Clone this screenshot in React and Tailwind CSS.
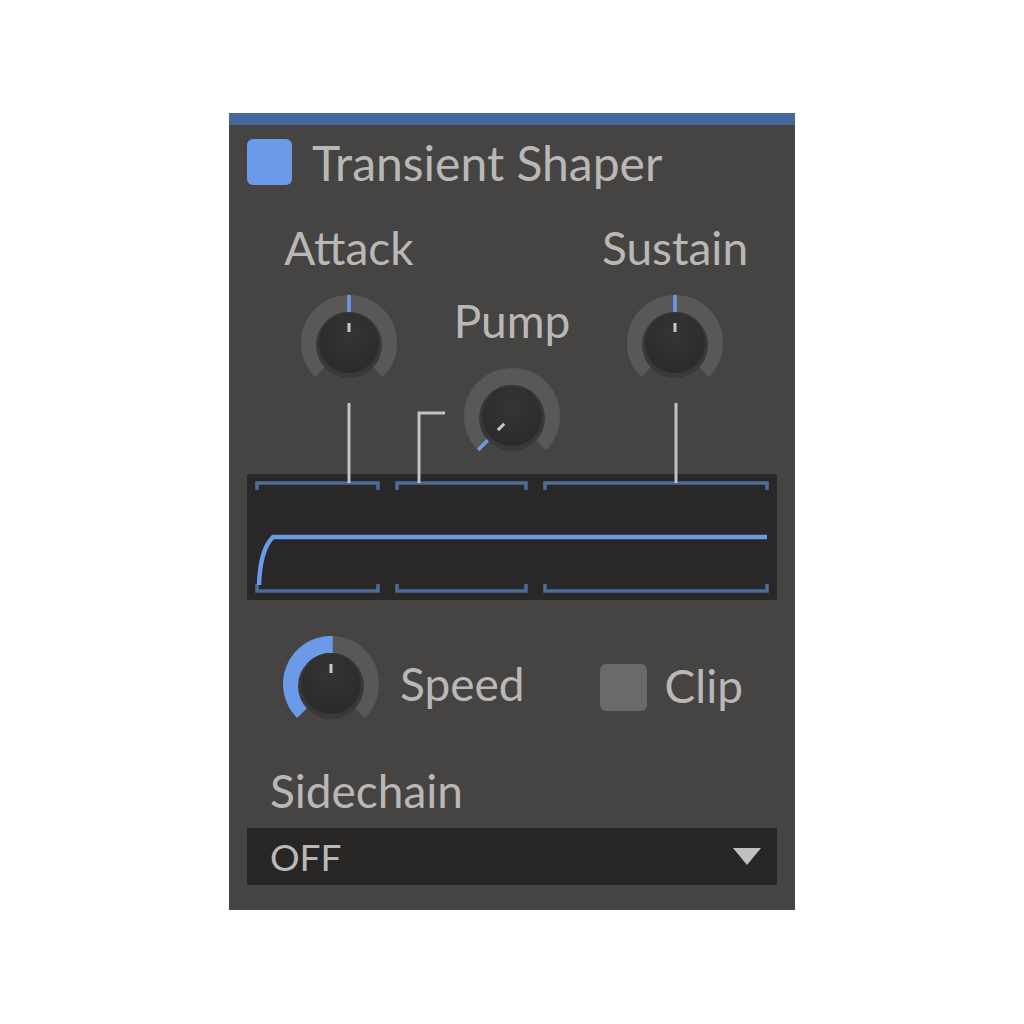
import React from "react";

const BLUE = "#6b9be8";

function pt(cx, cy, r, deg) {
  const a = (deg * Math.PI) / 180;
  return [cx + r * Math.sin(a), cy - r * Math.cos(a)];
}

function arc(cx, cy, r, from, to) {
  const [x1, y1] = pt(cx, cy, r, from);
  const [x2, y2] = pt(cx, cy, r, to);
  const large = to - from > 180 ? 1 : 0;
  return `M${x1} ${y1} A${r} ${r} 0 ${large} 1 ${x2} ${y2}`;
}

function Knob({ value, bipolar = false }) {
  // value is an angle between -135 and 135
  const start = bipolar ? 0 : -135;
  const [p1x, p1y] = pt(50, 50, 11, value);
  const [p2x, p2y] = pt(50, 50, 20, value);
  const [b1x, b1y] = pt(50, 50, 31, value);
  const [b2x, b2y] = pt(50, 50, 48, value);
  return (
    <svg width="100" height="100" viewBox="0 0 100 100">
      <defs>
        <radialGradient id="kb" cx="50%" cy="35%" r="65%">
          <stop offset="0%" stopColor="#363534" />
          <stop offset="100%" stopColor="#2b2a2a" />
        </radialGradient>
      </defs>
      <path d={arc(50, 50, 39.5, -135, 135)} stroke="#595857" strokeWidth="17" fill="none" />
      {value !== start && (
        <path
          d={value > start ? arc(50, 50, 39.5, start, value) : arc(50, 50, 39.5, value, start)}
          stroke={BLUE}
          strokeWidth="17"
          fill="none"
        />
      )}
      <line x1={b1x} y1={b1y} x2={b2x} y2={b2y} stroke={BLUE} strokeWidth="3.5" />
      <circle cx="50" cy="52" r="33" fill="#3a3938" />
      <circle cx="50" cy="50" r="31" fill="url(#kb)" />
      <circle cx="50" cy="50" r="30.5" fill="none" stroke="#3d3c3b" strokeWidth="1" />
      <line x1={p1x} y1={p1y} x2={p2x} y2={p2y} stroke="#c9c7c5" strokeWidth="3" />
    </svg>
  );
}

function Bracket({ x1, x2 }) {
  return (
    <g stroke="#4e6c98" strokeWidth="3.5" fill="none">
      <path d={`M${x1} 16 V9 H${x2} V16`} />
      <path d={`M${x1} 110 V117 H${x2} V110`} />
    </g>
  );
}

export default function App() {
  const font = { fontFamily: "Lato, 'Open Sans', sans-serif" };
  return (
    <div className="min-h-screen bg-white pt-[113px]" style={font}>
      <div className="mx-auto w-[566px] h-[797px] bg-[#454443] flex flex-col">
        <div className="h-[12px] bg-[#46689c]" />

        {/* Header */}
        <div className="flex items-start gap-[20px] pl-[18px] h-[82px]">
          <div className="mt-[14px] w-[45px] h-[46px] rounded-[6px] bg-[#6b9be8]" />
          <div className="mt-[14px] text-[48px] leading-none text-[#bab8b6]">Transient Shaper</div>
        </div>

        {/* Knobs + connectors + graph */}
        <div className="relative px-[18px]">
          <div className="flex h-[267px]">
            <div className="w-[204px] flex flex-col items-center pt-[18px]">
              <div className="text-[46px] leading-none text-[#bab8b6]">Attack</div>
              <div className="mt-[22px]">
                <Knob value={0} bipolar />
              </div>
            </div>
            <div className="w-[122px] flex flex-col items-center pt-[91px]">
              <div className="text-[46px] leading-none text-[#bab8b6]">Pump</div>
              <div className="mt-[22px]">
                <Knob value={-135} />
              </div>
            </div>
            <div className="w-[204px] flex flex-col items-center pt-[18px]">
              <div className="text-[46px] leading-none text-[#bab8b6]">Sustain</div>
              <div className="mt-[22px]">
                <Knob value={0} bipolar />
              </div>
            </div>
          </div>

          <div className="h-[126px] bg-[#292727]">
            <svg width="530" height="126" viewBox="0 0 530 126">
              <Bracket x1={10} x2={131} />
              <Bracket x1={150} x2={279} />
              <Bracket x1={298} x2={520} />
              <path d="M12 111 Q13 76 26 63 L520 63" stroke={BLUE} strokeWidth="4.5" fill="none" />
            </svg>
          </div>

          <svg className="absolute left-0 top-0 pointer-events-none" width="566" height="290" viewBox="0 0 566 290">
            <g stroke="#c4c2c0" strokeWidth="3" fill="none">
              <path d="M120 196 V276" />
              <path d="M190 276 V206 H216" />
              <path d="M447 196 V276" />
            </g>
          </svg>
        </div>

        {/* Speed + Clip */}
        <div className="flex items-center h-[168px] pl-[52px]">
          <Knob value={0} />
          <div className="ml-[19px] text-[46px] leading-none text-[#bab8b6]">Speed</div>
          <div className="ml-[75px] mt-[6px] w-[47px] h-[47px] rounded-[6px] bg-[#6b6a69]" />
          <div className="ml-[18px] mt-[4px] text-[46px] leading-none text-[#bab8b6]">Clip</div>
        </div>

        {/* Sidechain */}
        <div className="pl-[41px] text-[46px] leading-none text-[#bab8b6]">Sidechain</div>
        <div className="mx-[18px] mt-[14px] h-[57px] bg-[#272625] flex items-center justify-between pl-[23px] pr-[16px]">
          <span className="text-[37px] leading-none text-[#bab8b6]">OFF</span>
          <svg width="28" height="17" viewBox="0 0 28 17">
            <path d="M0 0 H28 L14 17 Z" fill="#c2c0be" />
          </svg>
        </div>
      </div>
    </div>
  );
}
